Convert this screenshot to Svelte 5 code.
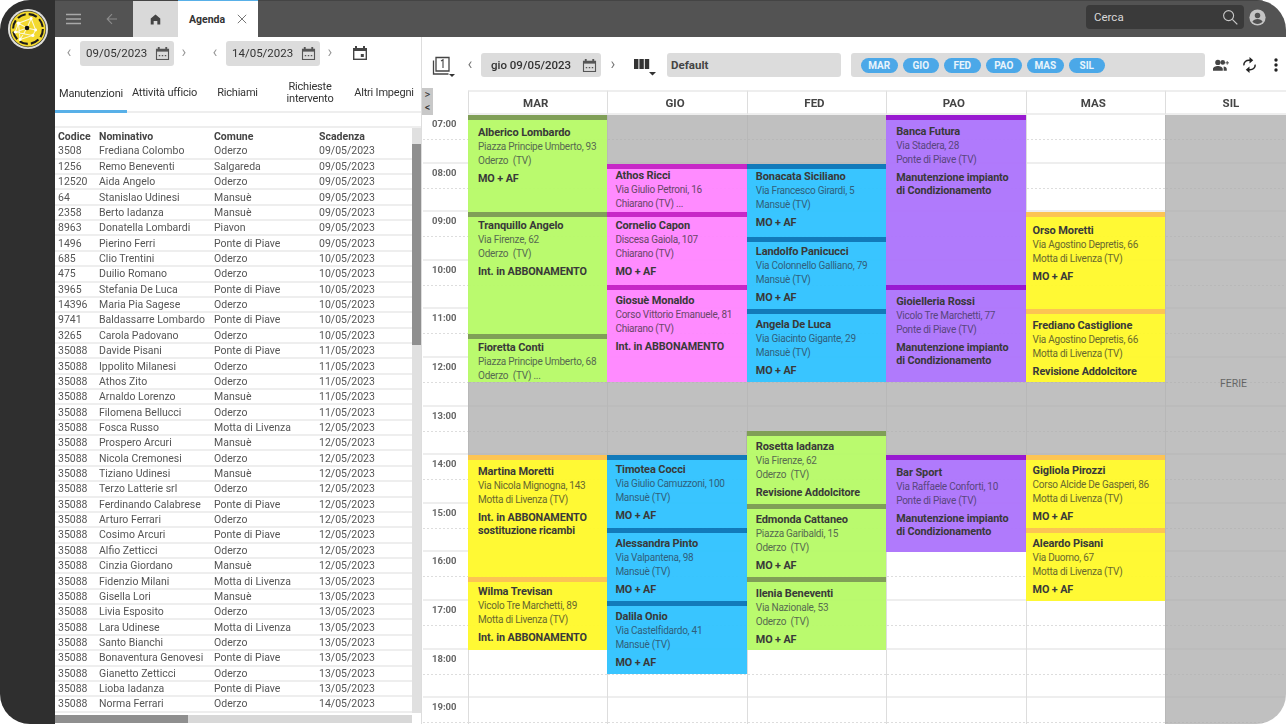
<script>
	const rows = [
		['3508', 'Frediana Colombo', 'Oderzo', '09/05/2023'],
		['1256', 'Remo Beneventi', 'Salgareda', '09/05/2023'],
		['12520', 'Aida Angelo', 'Oderzo', '09/05/2023'],
		['64', 'Stanislao Udinesi', 'Mansuè', '09/05/2023'],
		['2358', 'Berto Iadanza', 'Mansuè', '09/05/2023'],
		['8963', 'Donatella Lombardi', 'Piavon', '09/05/2023'],
		['1496', 'Pierino Ferri', 'Ponte di Piave', '09/05/2023'],
		['685', 'Clio Trentini', 'Oderzo', '10/05/2023'],
		['475', 'Duilio Romano', 'Oderzo', '10/05/2023'],
		['3965', 'Stefania De Luca', 'Ponte di Piave', '10/05/2023'],
		['14396', 'Maria Pia Sagese', 'Oderzo', '10/05/2023'],
		['9741', 'Baldassarre Lombardo', 'Ponte di Piave', '10/05/2023'],
		['3265', 'Carola Padovano', 'Oderzo', '10/05/2023'],
		['35088', 'Davide Pisani', 'Ponte di Piave', '11/05/2023'],
		['35088', 'Ippolito Milanesi', 'Oderzo', '11/05/2023'],
		['35088', 'Athos Zito', 'Oderzo', '11/05/2023'],
		['35088', 'Arnaldo Lorenzo', 'Mansuè', '11/05/2023'],
		['35088', 'Filomena Bellucci', 'Oderzo', '11/05/2023'],
		['35088', 'Fosca Russo', 'Motta di Livenza', '12/05/2023'],
		['35088', 'Prospero Arcuri', 'Mansuè', '12/05/2023'],
		['35088', 'Nicola Cremonesi', 'Oderzo', '12/05/2023'],
		['35088', 'Tiziano Udinesi', 'Mansuè', '12/05/2023'],
		['35088', 'Terzo Latterie srl', 'Oderzo', '12/05/2023'],
		['35088', 'Ferdinando Calabrese', 'Ponte di Piave', '12/05/2023'],
		['35088', 'Arturo Ferrari', 'Oderzo', '12/05/2023'],
		['35088', 'Cosimo Arcuri', 'Ponte di Piave', '12/05/2023'],
		['35088', 'Alfio Zetticci', 'Oderzo', '12/05/2023'],
		['35088', 'Cinzia Giordano', 'Mansuè', '12/05/2023'],
		['35088', 'Fidenzio Milani', 'Motta di Livenza', '13/05/2023'],
		['35088', 'Gisella Lori', 'Mansuè', '13/05/2023'],
		['35088', 'Livia Esposito', 'Oderzo', '13/05/2023'],
		['35088', 'Lara Udinese', 'Motta di Livenza', '13/05/2023'],
		['35088', 'Santo Bianchi', 'Oderzo', '13/05/2023'],
		['35088', 'Bonaventura Genovesi', 'Ponte di Piave', '13/05/2023'],
		['35088', 'Gianetto Zetticci', 'Oderzo', '13/05/2023'],
		['35088', 'Lioba Iadanza', 'Ponte di Piave', '13/05/2023'],
		['35088', 'Norma Ferrari', 'Oderzo', '14/05/2023']
	];

	const tabs = ['Manutenzioni', 'Attività ufficio', 'Richiami', 'Richieste intervento', 'Altri Impegni'];
	const hours = ['07:00', '08:00', '09:00', '10:00', '11:00', '12:00', '13:00', '14:00', '15:00', '16:00', '17:00', '18:00', '19:00'];
	const pills = ['MAR', 'GIO', 'FED', 'PAO', 'MAS', 'SIL'];
	const HOUR = 48.6;
	const y = (h) => Math.round((h - 7) * HOUR);

	// s/e: start and end in hours, p: space above the name, grey blocks have no name
	const columns = [
		{ name: 'MAR', pad: 10, items: [
			{ s: 7, e: 9, p: 6, c: 'green', n: 'Alberico Lombardo', a: 'Piazza Principe Umberto, 93', t: 'Oderzo  (TV)', w: 'MO + AF' },
			{ s: 9, e: 11.5, p: 2, c: 'green', n: 'Tranquillo Angelo', a: 'Via Firenze, 62', t: 'Oderzo  (TV)', w: 'Int. in ABBONAMENTO' },
			{ s: 11.5, e: 12.5, p: 2, c: 'green', n: 'Fioretta Conti', a: 'Piazza Principe Umberto, 68', t: 'Oderzo  (TV) ...' },
			{ s: 12.5, e: 14, c: 'grey' },
			{ s: 14, e: 16.5, p: 5, c: 'yellow', n: 'Martina Moretti', a: 'Via Nicola Mignogna, 143', t: 'Motta di Livenza (TV)', w: 'Int. in ABBONAMENTO sostituzione ricambi' },
			{ s: 16.5, e: 18, p: 3, c: 'yellow', n: 'Wilma Trevisan', a: 'Vicolo Tre Marchetti, 89', t: 'Motta di Livenza (TV)', w: 'Int. in ABBONAMENTO' }
		] },
		{ name: 'GIO', pad: 8, items: [
			{ s: 7, e: 8, c: 'grey' },
			{ s: 8, e: 9, p: 0, c: 'pink', n: 'Athos Ricci', a: 'Via Giulio Petroni, 16', t: 'Chiarano (TV) ...' },
			{ s: 9, e: 10.5, p: 2, c: 'pink', n: 'Cornelio Capon', a: 'Discesa Gaiola, 107', t: 'Chiarano (TV)', w: 'MO + AF' },
			{ s: 10.5, e: 12.5, p: 4, c: 'pink', n: 'Giosuè Monaldo', a: 'Corso Vittorio Emanuele, 81', t: 'Chiarano (TV)', w: 'Int. in ABBONAMENTO' },
			{ s: 12.5, e: 14, c: 'grey' },
			{ s: 14, e: 15.5, p: 3, c: 'blue', n: 'Timotea Cocci', a: 'Via Giulio Camuzzoni, 100', t: 'Mansuè (TV)', w: 'MO + AF' },
			{ s: 15.5, e: 17, p: 4, c: 'blue', n: 'Alessandra Pinto', a: 'Via Valpantena, 98', t: 'Mansuè (TV)', w: 'MO + AF' },
			{ s: 17, e: 18.5, p: 4, c: 'blue', n: 'Dalila Onio', a: 'Via Castelfidardo, 41', t: 'Mansuè (TV)', w: 'MO + AF' }
		] },
		{ name: 'FED', pad: 9, items: [
			{ s: 7, e: 8, c: 'grey' },
			{ s: 8, e: 9.5, p: 1, c: 'blue', n: 'Bonacata Siciliano', a: 'Via Francesco Girardi, 5', t: 'Mansuè (TV)', w: 'MO + AF' },
			{ s: 9.5, e: 11, p: 3, c: 'blue', n: 'Landolfo Panicucci', a: 'Via Colonnello Galliano, 79', t: 'Mansuè (TV)', w: 'MO + AF' },
			{ s: 11, e: 12.5, p: 4, c: 'blue', n: 'Angela De Luca', a: 'Via Giacinto Gigante, 29', t: 'Mansuè (TV)', w: 'MO + AF' },
			{ s: 12.5, e: 13.5, c: 'grey' },
			{ s: 13.5, e: 15, p: 4, c: 'green', n: 'Rosetta Iadanza', a: 'Via Firenze, 62', t: 'Oderzo  (TV)', w: 'Revisione Addolcitore' },
			{ s: 15, e: 16.5, p: 4, c: 'green', n: 'Edmonda Cattaneo', a: 'Piazza Garibaldi, 15', t: 'Oderzo  (TV)', w: 'MO + AF' },
			{ s: 16.5, e: 18, p: 5, c: 'green', n: 'Ilenia Beneventi', a: 'Via Nazionale, 53', t: 'Oderzo  (TV)', w: 'MO + AF' }
		] },
		{ name: 'PAO', pad: 10, items: [
			{ s: 7, e: 10.5, p: 5, c: 'purple', n: 'Banca Futura', a: 'Via Stadera, 28', t: 'Ponte di Piave (TV)', w: 'Manutenzione impianto di Condizionamento' },
			{ s: 10.5, e: 12.5, p: 5, c: 'purple', n: 'Gioielleria Rossi', a: 'Vicolo Tre Marchetti, 77', t: 'Ponte di Piave (TV)', w: 'Manutenzione impianto di Condizionamento' },
			{ s: 12.5, e: 14, c: 'grey' },
			{ s: 14, e: 16, p: 6, c: 'purple', n: 'Bar Sport', a: 'Via Raffaele Conforti, 10', t: 'Ponte di Piave (TV)', w: 'Manutenzione impianto di Condizionamento' }
		] },
		{ name: 'MAS', pad: 7, items: [
			{ s: 9, e: 11, p: 7, c: 'yellow', n: 'Orso Moretti', a: 'Via Agostino Depretis, 66', t: 'Motta di Livenza (TV)', w: 'MO + AF' },
			{ s: 11, e: 12.5, p: 5, c: 'yellow', n: 'Frediano Castiglione', a: 'Via Agostino Depretis, 66', t: 'Motta di Livenza (TV)', w: 'Revisione Addolcitore' },
			{ s: 12.5, e: 14, c: 'grey' },
			{ s: 14, e: 15.5, p: 4, c: 'yellow', n: 'Gigliola Pirozzi', a: 'Corso Alcide De Gasperi, 86', t: 'Motta di Livenza (TV)', w: 'MO + AF' },
			{ s: 15.5, e: 17, p: 4, c: 'yellow', n: 'Aleardo Pisani', a: 'Via Duomo, 67', t: 'Motta di Livenza (TV)', w: 'MO + AF' }
		] },
		{ name: 'SIL', pad: 0, items: [{ s: 7, e: 20, c: 'grey', label: 'FERIE' }] }
	];
</script>

{#snippet calIcon()}
	<svg class="cal" viewBox="0 0 16 16" aria-hidden="true">
		<path fill="#555" d="M1 3h2V1h2v2h6V1h2v2h2v12H1z" />
		<rect x="2.2" y="6" width="11.6" height="7.8" fill="#dcdcdc" />
		<path fill="#555" d="M4 9.5h1.6v1.4H4zM7.2 9.5h1.6v1.4H7.2zM10.4 9.5H12v1.4h-1.6z" />
	</svg>
{/snippet}

<div class="app">
	<aside class="rail">
		<svg class="logo" viewBox="0 0 44 44" aria-hidden="true">
			<circle cx="22" cy="22" r="21" fill="#dfdfdc" />
			<circle cx="22" cy="22" r="19" fill="#3a3a34" />
			<circle cx="22" cy="22" r="18.3" fill="#f3d92e" />
			<circle cx="22" cy="22" r="15.6" fill="none" stroke="#1c1c1c" stroke-width="2.2" stroke-dasharray="9 3.3" />
			<path fill="none" stroke="#fbf8d8" stroke-width="1.1" d="M12 16L25.3 11L30 23L21 21L12 16L8.7 25.3L21 21L13.7 33L27 28.7L30 23M12 16L13.7 33M25.3 11L21 21M8.7 25.3L27 28.7" />
			<g fill="#fff">
				<circle cx="12" cy="16" r="1.9" /><circle cx="25.3" cy="11" r="1.5" /><circle cx="30" cy="23" r="1.5" />
				<circle cx="8.7" cy="25.3" r="1.5" /><circle cx="13.7" cy="33" r="1.5" /><circle cx="27" cy="28.7" r="1.7" />
			</g>
			<circle cx="21" cy="21" r="2.4" fill="#111" />
		</svg>
	</aside>

	<div class="main">
		<header class="topbar">
			<button class="bar-btn menu" aria-label="Menu">
				<svg viewBox="0 0 16 12" width="15" height="12"><path stroke="#a8a8a8" stroke-width="1.7" d="M0 1.2h16M0 6h16M0 10.8h16" /></svg>
			</button>
			<button class="bar-btn back" aria-label="Indietro">
				<svg viewBox="0 0 12 12" width="12" height="12"><path fill="none" stroke="#8c8c8c" stroke-width="1.1" d="M11 6H1.5M6 1.2L1.2 6 6 10.8" /></svg>
			</button>
			<div class="home">
				<svg viewBox="0 0 12 12" width="11" height="11"><path fill="#444" d="M6 .6L11.2 5v6.4H8V7.6H4v3.8H.8V5z" /></svg>
			</div>
			<div class="tab-agenda">
				<span>Agenda</span>
				<svg viewBox="0 0 10 10" width="10" height="10"><path stroke="#777" stroke-width="1" d="M.8.8l8.4 8.4M9.2.8L.8 9.2" /></svg>
			</div>
			<div class="search">
				<span>Cerca</span>
				<svg viewBox="0 0 16 16" width="16" height="16"><circle cx="6.6" cy="6.6" r="5" fill="none" stroke="#c8c8c8" stroke-width="1.1" /><path stroke="#c8c8c8" stroke-width="1.2" d="M10.3 10.3l5 5" /></svg>
			</div>
			<svg class="user" viewBox="0 0 18 18" width="17" height="17">
				<circle cx="9" cy="9" r="8.6" fill="#c4c4c4" />
				<circle cx="9" cy="7" r="2.9" fill="#505050" />
				<path fill="#505050" d="M3.6 13.6c1-2 3.2-3 5.4-3s4.4 1 5.4 3c-1.2 1.3-3.2 2.2-5.4 2.2s-4.2-.9-5.4-2.2z" />
			</svg>
		</header>

		<div class="content">
			<section class="left">
				<div class="dates">
					<span class="chev">‹</span>
					<div class="date">09/05/2023 {@render calIcon()}</div>
					<span class="chev">›</span>
					<span class="chev second">‹</span>
					<div class="date">14/05/2023 {@render calIcon()}</div>
					<span class="chev">›</span>
					<svg class="today" viewBox="0 0 16 16" aria-hidden="true">
						<path fill="#444" d="M1 3h2V1h2v2h6V1h2v2h2v12H1z" />
						<rect x="2.4" y="6" width="11.2" height="7.6" fill="#fff" />
						<rect x="8.8" y="9" width="3" height="3" fill="#444" />
					</svg>
				</div>

				<nav class="tabs">
					{#each tabs as tab, i}
						<div class="tab" class:active={i === 0}>{tab}</div>
					{/each}
				</nav>

				<div class="spacer"></div>

				<div class="table-wrap">
					<div class="table">
						<div class="row head">
							<span>Codice</span><span>Nominativo</span><span>Comune</span><span>Scadenza</span>
						</div>
						{#each rows as row}
							<div class="row">
								{#each row as cell}<span>{cell}</span>{/each}
							</div>
						{/each}
					</div>
					<div class="vscroll"><div class="vthumb"></div></div>
				</div>
				<div class="hscroll"><div class="hthumb"></div></div>
			</section>

			<section class="right">
				<div class="toolbar">
					<svg class="view-one" viewBox="0 0 24 22" aria-hidden="true">
						<path fill="none" stroke="#444" stroke-width="1.3" d="M5 1.5h13v13.5H5zM2.5 4.5V18h15" />
						<path fill="none" stroke="#444" stroke-width="1.1" d="M10 5l2-1.2V12" />
						<path fill="#333" d="M18 18h6l-3 3z" />
					</svg>
					<span class="chev light">‹</span>
					<div class="date day">gio 09/05/2023 {@render calIcon()}</div>
					<span class="chev light">›</span>
					<svg class="view-cols" viewBox="0 0 22 20" aria-hidden="true">
						<path fill="#333" d="M0 1h4.4v10H0zM5.4 1h4.4v10H5.4zM10.8 1h4.4v10h-4.4zM15 14h7l-3.5 3.5z" />
					</svg>
					<div class="default">Default</div>
					<div class="pills">
						{#each pills as p}<span class="pill">{p}</span>{/each}
					</div>
					<div class="tools">
						<svg class="people" viewBox="0 0 18 14" width="16" height="13">
							<circle cx="5.5" cy="3.5" r="3" fill="#444" /><circle cx="11" cy="3.5" r="2.6" fill="#444" />
							<path fill="#444" d="M0 13v-2c0-2.4 3-3.4 5.5-3.4S11 8.6 11 11v2zM12 8c2 .2 3.5 1 3.5 3v2H12z" />
							<path stroke="#444" stroke-width="1" d="M14 4h4M16 2v4" />
						</svg>
						<svg class="sync" viewBox="0 0 16 18" width="15" height="18">
							<path fill="none" stroke="#222" stroke-width="1.6" d="M2 9.5C1.5 6 4.5 3.5 8.5 4M14 8.5c.5 3.500-2.500 6-6.500 5.500" />
							<path fill="#222" d="M8 .5l4 3.500-4 3.500zM8 10.500L4 14l4 3.500z" />
						</svg>
						<svg class="dots" viewBox="0 0 4 14" width="4" height="14">
							<circle cx="2" cy="2" r="1.7" fill="#222" /><circle cx="2" cy="7" r="1.7" fill="#222" /><circle cx="2" cy="12" r="1.7" fill="#222" />
						</svg>
					</div>
				</div>

				<div class="calendar">
					<div class="handle"><span>&gt;</span><span>&lt;</span></div>
					<div class="gutter">
						{#each hours as h}
							<div class="hour">{h}</div>
						{/each}
					</div>
					<div class="days">
						{#each columns as col}
							<div class="day-col" class:last={col.name === 'SIL'}>
								<div class="day-head">{col.name}</div>
								<div class="day-body">
									{#each hours as h}<div class="slot"></div>{/each}
									{#each col.items as ev}
										<div
											class="event {ev.c}"
											style="top: {y(ev.s)}px; height: {y(ev.e) - y(ev.s)}px; padding-top: {ev.p ?? 0}px; padding-left: {col.pad}px;"
										>
											{#if ev.n}
												<div class="ev-name">{ev.n}</div>
												<div class="ev-line">{ev.a}</div>
												<div class="ev-line">{ev.t}</div>
												{#if ev.w}<div class="ev-work">{ev.w}</div>{/if}
											{:else if ev.label}
												<div class="ev-label" style="top: {5 * HOUR + 19}px;">{ev.label}</div>
											{/if}
										</div>
									{/each}
								</div>
							</div>
						{/each}
					</div>
				</div>
			</section>
		</div>
	</div>
</div>

<style>
	:global(body) {
		background: #fff;
		font-family: Roboto, 'Liberation Sans', sans-serif;
	}

	.app {
		display: flex;
		width: 1286px;
		height: 724px;
		border-radius: 30px;
		overflow: hidden;
		background: #fff;
		filter: blur(0.35px);
	}

	.rail {
		width: 55px;
		flex: none;
		background: #2f2f2f;
		padding: 8px 0 0 7px;
		box-sizing: border-box;
	}

	.logo {
		display: block;
		width: 42px;
		height: 42px;
	}

	.main {
		flex: 1;
		min-width: 0;
		display: flex;
		flex-direction: column;
	}

	.topbar {
		height: 37px;
		flex: none;
		display: flex;
		align-items: stretch;
		background: #535353;
		border-top: 1px solid #444;
		box-sizing: border-box;
	}

	.bar-btn {
		background: none;
		border: 0;
		padding: 0;
		display: flex;
		align-items: center;
		justify-content: center;
		height: 35px;
	}

	.menu {
		width: 36px;
	}

	.back {
		width: 42px;
	}

	.home {
		width: 45px;
		background: #d9d9d9;
		display: flex;
		align-items: center;
		justify-content: center;
	}

	.tab-agenda {
		width: 80px;
		background: #fff;
		border-top: 1px solid #58b0e8;
		margin-top: -1px;
		display: flex;
		align-items: center;
		gap: 12px;
		padding-left: 11px;
		box-sizing: border-box;
		font-size: 10.5px;
		font-weight: 700;
		color: #333;
	}

	.search {
		margin-left: auto;
		width: 158px;
		height: 24px;
		margin-top: 4px;
		background: #3a3a3a;
		border-radius: 4px;
		display: flex;
		align-items: center;
		justify-content: space-between;
		padding: 0 6px 0 8px;
		box-sizing: border-box;
		font-size: 11.5px;
		color: #d8d8d8;
	}

	.user {
		margin: 8px 20px 0 5px;
	}

	.content {
		flex: 1;
		min-height: 0;
		display: flex;
	}

	.left {
		width: 367px;
		flex: none;
		display: flex;
		flex-direction: column;
		border-right: 1px solid #ddd;
		box-sizing: border-box;
	}

	.dates {
		height: 32px;
		margin-bottom: 8px;
		flex: none;
		display: flex;
		align-items: center;
		padding: 0 0 0 10px;
		color: #333;
	}

	.chev {
		width: 8px;
		font-size: 16px;
		line-height: 1;
		color: #999;
		text-align: center;
		margin-top: -3px;
	}

	.chev.second {
		margin-left: 23px;
	}

	.chev.light {
		color: #777;
	}

	.date {
		height: 25px;
		width: 94px;
		margin: 0 6px 0 7px;
		padding: 0 4px 0 6px;
		display: flex;
		align-items: center;
		justify-content: space-between;
		box-sizing: border-box;
		background: #dcdcdc;
		border-radius: 3px;
		font-size: 11.5px;
		color: #333;
	}

	.cal {
		width: 15px;
		height: 15px;
		flex: none;
	}

	.today {
		width: 16px;
		height: 16px;
		margin-left: 18px;
	}

	.tabs {
		height: 34px;
		flex: none;
		display: grid;
		grid-template-columns: 72px 75px 71px 74px 1fr;
		border-bottom: 2px solid #eee;
	}

	.tab {
		display: flex;
		align-items: center;
		justify-content: center;
		text-align: center;
		font-size: 11px;
		line-height: 12px;
		color: #333;
		letter-spacing: -0.2px;
		padding-bottom: 2px;
		box-sizing: border-box;
	}

	.tab.active {
		border-bottom: 3px solid #58b0e8;
		margin-bottom: -2px;
		padding-bottom: 0;
	}

	.spacer {
		height: 13px;
		flex: none;
		border-bottom: 2px solid #eee;
	}

	.table-wrap {
		flex: 1;
		min-height: 0;
		display: flex;
		overflow: hidden;
	}

	.table {
		flex: 1;
		min-width: 0;
	}

	.row {
		display: grid;
		grid-template-columns: 41px 115px 105px 1fr;
		height: 15.36px;
		padding-left: 3px;
		align-items: center;
		font-size: 10.5px;
		color: #555;
		border-bottom: 2px solid #eee;
		box-sizing: border-box;
		white-space: nowrap;
	}

	.row.head {
		height: 16.3px;
		padding-top: 2px;
		align-items: start;
		font-weight: 700;
		color: #444;
		border-bottom: 0;
	}

	.vscroll {
		width: 9px;
		flex: none;
		background: #e0e0e0;
	}

	.vthumb {
		margin-top: 16px;
		height: 201px;
		background: #8f8f8f;
	}

	.hscroll {
		height: 8px;
		flex: none;
		margin: 2px 9px 1px 0;
		background: #d8d8d8;
	}

	.hthumb {
		width: 133px;
		height: 100%;
		background: #8f8f8f;
	}

	.right {
		flex: 1;
		min-width: 0;
		display: flex;
		flex-direction: column;
	}

	.toolbar {
		height: 53px;
		flex: none;
		display: flex;
		align-items: center;
		padding: 3px 0 0 9px;
		box-sizing: border-box;
	}

	.view-one {
		width: 24px;
		height: 22px;
		margin-top: 3px;
		margin-right: 11px;
	}

	.date.day {
		width: 120px;
		height: 24px;
		margin: 0 8px 0 7px;
		padding-left: 10px;
		font-size: 11.5px;
		font-weight: 500;
	}

	.view-cols {
		width: 22px;
		height: 20px;
		margin: 6px 0 0 17px;
	}

	.default {
		width: 174px;
		height: 24px;
		margin-left: 11px;
		padding-left: 4px;
		display: flex;
		align-items: center;
		box-sizing: border-box;
		background: #dcdcdc;
		border-radius: 3px;
		font-size: 11.5px;
		font-weight: 700;
		color: #444;
	}

	.pills {
		width: 354px;
		height: 24px;
		margin-left: 10px;
		padding-left: 10px;
		display: flex;
		align-items: center;
		gap: 5px;
		box-sizing: border-box;
		background: #dcdcdc;
		border-radius: 3px;
	}

	.pill {
		width: 36.5px;
		height: 15px;
		display: flex;
		align-items: center;
		justify-content: center;
		background: #4ba8e8;
		border-radius: 8px;
		font-size: 10px;
		font-weight: 700;
		color: #e8f4fc;
	}

	.tools {
		flex: 1;
		display: flex;
		align-items: center;
		padding-left: 8px;
	}

	.sync {
		margin-left: 13px;
	}

	.dots {
		margin-left: 17px;
	}

	.calendar {
		flex: 1;
		min-height: 0;
		display: flex;
		position: relative;
	}

	.handle {
		position: absolute;
		left: 0;
		top: -2px;
		width: 11px;
		height: 27px;
		background: #c8c8c8;
		display: flex;
		flex-direction: column;
		align-items: center;
		font-size: 11px;
		line-height: 13px;
		color: #333;
		z-index: 1;
	}

	.gutter {
		width: 45px;
		flex: none;
		margin-top: 25px;
		margin-left: 1px;
		box-sizing: border-box;
		overflow: hidden;
	}

	.hour {
		height: 48.6px;
		padding: 3px 0 0 9px;
		box-sizing: border-box;
		font-size: 9.5px;
		font-weight: 700;
		color: #666;
		border-bottom: 2px solid #eee;
		background-image: linear-gradient(to right, #ddd 50%, transparent 50%);
		background-size: 4px 1px;
		background-repeat: repeat-x;
		background-position: 0 24px;
	}

	.days {
		flex: 1;
		min-width: 0;
		display: flex;
		overflow: hidden;
	}

	.day-col {
		width: 139.4px;
		flex: none;
		display: flex;
		flex-direction: column;
	}

	.day-col.last {
		width: 121px;
	}

	.day-head {
		height: 25px;
		flex: none;
		display: flex;
		align-items: center;
		justify-content: center;
		padding-right: 5px;
		font-size: 11.5px;
		font-weight: 700;
		color: #444;
		border-top: 2px solid #eee;
		border-left: 1px solid #ddd;
		border-bottom: 2px solid #eee;
		box-sizing: border-box;
	}

	.last .day-head {
		padding: 0 0 0 10px;
	}

	.day-body {
		flex: 1;
		position: relative;
		border-left: 1px solid #ddd;
		box-sizing: border-box;
	}

	.slot {
		height: 48.6px;
		box-sizing: border-box;
		border-bottom: 2px solid #eee;
		background-image: linear-gradient(to right, #ddd 50%, transparent 50%);
		background-size: 4px 1px;
		background-repeat: repeat-x;
		background-position: 0 24px;
	}

	.event {
		position: absolute;
		left: -1px;
		right: 0;
		padding-right: 4px;
		border-top: 5px solid transparent;
		box-sizing: border-box;
		overflow: hidden;
		color: #444;
		opacity: 0.97;
	}

	.event.grey {
		background: #ababab;
		opacity: 0.75;
		border-top: 0;
	}

	.event.green {
		background: #b8fa6a;
		border-top-color: #7c9c52;
		color: #52664a;
	}

	.event.pink {
		background: #ff88ff;
		border-top-color: #c622c6;
		color: #644064;
	}

	.event.blue {
		background: #33c4ff;
		border-top-color: #0b76b8;
		color: #2a5a78;
	}

	.event.purple {
		background: #ae76fc;
		border-top-color: #9613d0;
		color: #54407a;
		padding-right: 16px;
	}

	.event.yellow {
		background: #fff92e;
		border-top-color: #fcc34e;
		color: #646428;
	}

	.ev-name {
		font-size: 11px;
		line-height: 14px;
		font-weight: 700;
		color: #333;
		white-space: nowrap;
		letter-spacing: -0.1px;
	}

	.ev-line {
		font-size: 10px;
		line-height: 14px;
		white-space: pre;
		letter-spacing: -0.25px;
	}

	.ev-work {
		margin-top: 4px;
		font-size: 10.8px;
		line-height: 13px;
		font-weight: 700;
		color: #333;
		letter-spacing: -0.1px;
	}

	.ev-label {
		position: absolute;
		left: 16px;
		right: 0;
		text-align: center;
		font-size: 10.5px;
		color: #333;
	}
</style>
